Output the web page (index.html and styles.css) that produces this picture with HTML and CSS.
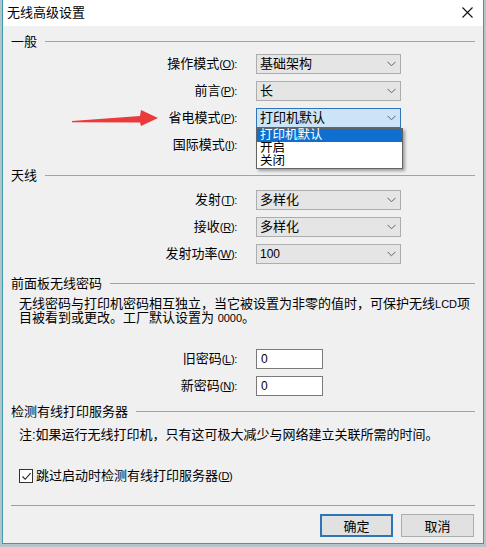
FILE: index.html
```html
<!DOCTYPE html>
<html lang="zh-CN">
<head>
    <meta charset="UTF-8">
    <title>无线高级设置</title>
    <link rel="stylesheet" href="styles.css">
</head>
<body>

    <div class="window">
        <div class="titlebar">
            <span class="title">无线高级设置</span>
            <svg class="close" width="11" height="11" viewBox="0 0 11 11">
                <path d="M0.5 0.5 L10.5 10.5 M10.5 0.5 L0.5 10.5" stroke="#111" stroke-width="1.1" fill="none"/>
            </svg>
        </div>

        <div class="content">
            <!-- 一般 -->
            <div class="group-head first"><span>一般</span></div>
            <div class="form-grid">
                <label class="lbl">操作模式<span class="key">(<u>O</u>):</span></label>
                <div class="select"><span>基础架构</span><svg class="chev" width="9" height="6" viewBox="0 0 9 6"><path d="M0.5 0.8 L4.5 4.8 L8.5 0.8" stroke="#606060" fill="none"/></svg></div>

                <label class="lbl">前言<span class="key">(<u>P</u>):</span></label>
                <div class="select"><span>长</span><svg class="chev" width="9" height="6" viewBox="0 0 9 6"><path d="M0.5 0.8 L4.5 4.8 L8.5 0.8" stroke="#606060" fill="none"/></svg></div>

                <label class="lbl">省电模式<span class="key">(<u>P</u>):</span></label>
                <div class="select active">
                    <span>打印机默认</span><svg class="chev" width="9" height="6" viewBox="0 0 9 6"><path d="M0.5 0.8 L4.5 4.8 L8.5 0.8" stroke="#606060" fill="none"/></svg>
                    <ul class="droplist">
                        <li class="sel">打印机默认</li>
                        <li>开启</li>
                        <li>关闭</li>
                    </ul>
                </div>

                <label class="lbl">国际模式<span class="key">(<u>I</u>):</span></label>
                <!-- value is hidden behind the open list -->
                <div class="select"><span></span><svg class="chev" width="9" height="6" viewBox="0 0 9 6"><path d="M0.5 0.8 L4.5 4.8 L8.5 0.8" stroke="#606060" fill="none"/></svg></div>
            </div>

            <!-- 天线 -->
            <div class="group-head g2"><span>天线</span></div>
            <div class="form-grid">
                <label class="lbl">发射<span class="key">(<u>T</u>):</span></label>
                <div class="select"><span>多样化</span><svg class="chev" width="9" height="6" viewBox="0 0 9 6"><path d="M0.5 0.8 L4.5 4.8 L8.5 0.8" stroke="#606060" fill="none"/></svg></div>

                <label class="lbl">接收<span class="key">(<u>R</u>):</span></label>
                <div class="select"><span>多样化</span><svg class="chev" width="9" height="6" viewBox="0 0 9 6"><path d="M0.5 0.8 L4.5 4.8 L8.5 0.8" stroke="#606060" fill="none"/></svg></div>

                <label class="lbl">发射功率<span class="key">(<u>W</u>):</span></label>
                <div class="select"><span class="num">100</span><svg class="chev" width="9" height="6" viewBox="0 0 9 6"><path d="M0.5 0.8 L4.5 4.8 L8.5 0.8" stroke="#606060" fill="none"/></svg></div>
            </div>

            <!-- 前面板无线密码 -->
            <div class="group-head g3"><span>前面板无线密码</span></div>
            <p class="para">无线密码与打印机密码相互独立，当它被设置为非零的值时，可保护无线<span class="small">LCD</span>项<br>目被看到或更改。工厂默认设置为 <span class="small">0000</span>。</p>
            <div class="form-grid pw">
                <label class="lbl">旧密码<span class="key">(<u>L</u>):</span></label>
                <div class="textbox">0</div>

                <label class="lbl">新密码<span class="key">(<u>N</u>):</span></label>
                <div class="textbox">0</div>
            </div>

            <!-- 检测有线打印服务器 -->
            <div class="group-head g4"><span>检测有线打印服务器</span></div>
            <p class="note">注:如果运行无线打印机，只有这可极大减少与网络建立关联所需的时间。</p>
            <div class="check-row">
                <span class="checkbox">
                    <svg width="11" height="11" viewBox="0 0 11 11"><path d="M1.5 5.5 L4.2 8.3 L9.6 2.2" stroke="#222" stroke-width="1.1" fill="none"/></svg>
                </span>
                <span>跳过启动时检测有线打印服务器<span class="key">(<u>D</u>)</span></span>
            </div>

            <div class="separator"></div>

            <div class="buttons">
                <button class="btn default">确定</button>
                <button class="btn">取消</button>
            </div>
        </div>

        <svg class="arrow" width="100" height="26" viewBox="0 0 100 26">
            <polygon points="12,16 80,11 81,5 98,13 81,21 80,17.5 12,17.2" fill="#ea3a3c"/>
        </svg>
    </div>

</body>
</html>
```

FILE: styles.css
```css
body {
    margin: 0;
    padding: 0;
    background-color: #b7c5cb;
    font-family: "Liberation Sans", "Noto Sans CJK SC", sans-serif;
    font-size: 13px;
    color: #000;
}

.window {
    position: relative;
    width: 480px;
    height: 543px;
    margin-left: 2px;
    background-color: #f0f0f0;
    border: 1px solid #3d9cab;
    border-top: none;
}

.titlebar {
    height: 26px;
    background-color: #fff;
    display: flex;
    align-items: center;
    justify-content: space-between;
    padding: 0 10px 0 4px;
}

.title {
    line-height: 16px;
    margin-top: -1px;
}

.close {
    margin-top: -2px;
}

.content {
    padding: 8px 8px 0 8px;
}

/* group headers with the line */
.group-head {
    display: flex;
    align-items: center;
    gap: 8px;
    height: 15px;
    line-height: 15px;
}

.group-head::after {
    content: "";
    flex: 1;
    border-top: 1px solid #a3a3a3;
}

.g2 { margin-top: 13px; }
.g3 { margin-top: 12px; }
.g4 { margin-top: 8px; }

.form-grid {
    display: grid;
    grid-template-columns: 226px 145px;
    grid-auto-rows: 20px;
    column-gap: 19px;
    row-gap: 7px;
    margin-top: 5px;
}

.g2 + .form-grid {
    margin-top: 7px;
}

.form-grid.pw {
    grid-template-columns: 226px 67px;
    margin-top: 24px;
}

.lbl {
    text-align: right;
    line-height: 20px;
    white-space: nowrap;
}

.key {
    font-size: 11px;
    letter-spacing: -0.3px;
}

.select {
    position: relative;
    box-sizing: border-box;
    height: 20px;
    background-color: #e5e5e5;
    border: 1px solid #adadad;
    display: flex;
    align-items: center;
    justify-content: space-between;
    padding: 0 4px 0 3px;
    line-height: 18px;
}

.select.active {
    background-color: #cce4f7;
    border-color: #2f74b5;
}

.num {
    font-size: 12px;
}

.droplist {
    position: absolute;
    top: 19px;
    left: -1px;
    width: 145px;
    margin: 0;
    padding: 0;
    list-style: none;
    background-color: #fff;
    border: 1px solid #646464;
    box-shadow: 2px 2px 3px rgba(0, 0, 0, 0.35);
    z-index: 2;
}

.droplist li {
    height: 13px;
    line-height: 13px;
    font-size: 12.5px;
    padding-left: 3px;
}

.droplist li.sel {
    background-color: #0f6fd0;
    color: #fff;
}

.para {
    margin: 6px 0 0 0;
    padding-left: 8px;
    line-height: 13px;
    white-space: nowrap;
}

.small {
    font-size: 11px;
}

.textbox {
    box-sizing: border-box;
    height: 20px;
    background-color: #fff;
    border: 1px solid #7a7a7a;
    padding-left: 4px;
    line-height: 18px;
    font-size: 12px;
}

.note {
    margin: 9px 0 0 0;
    padding-left: 8px;
    line-height: 13px;
}

.check-row {
    display: flex;
    align-items: center;
    gap: 3px;
    margin-top: 28px;
    padding-left: 8px;
    height: 14px;
    line-height: 14px;
}

.checkbox {
    box-sizing: border-box;
    width: 14px;
    height: 14px;
    background-color: #fff;
    border: 1px solid #333;
    display: flex;
    align-items: center;
    justify-content: center;
}

.separator {
    margin-top: 22px;
    border-top: 1px solid #a0a0a0;
}

.buttons {
    display: flex;
    justify-content: flex-end;
    gap: 8px;
    margin-top: 8px;
    padding-right: 1px;
}

.btn {
    box-sizing: border-box;
    width: 73px;
    height: 23px;
    background-color: #e1e1e1;
    border: 1px solid #adadad;
    font-family: "Liberation Sans", "Noto Sans CJK SC", sans-serif;
    font-size: 13px;
    color: #000;
    padding: 0;
}

.btn.default {
    border: 2px solid #2f74b5;
}

/* red annotation arrow over the dialog */
.arrow {
    position: absolute;
    left: 57px;
    top: 105px;
}
```
